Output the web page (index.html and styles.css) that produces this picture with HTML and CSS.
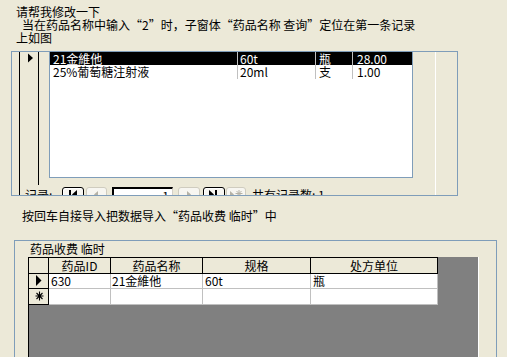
FILE: index.html
```html
<!DOCTYPE html>
<html lang="zh-CN">
<head>
<meta charset="utf-8">
<link rel="stylesheet" href="styles.css">
</head>
<body>
<div class="msg">
  <div>请帮我修改一下</div>
  <div class="indent">当在药品名称中输入“2”时，子窗体“药品名称 查询”定位在第一条记录</div>
  <div>上如图</div>
</div>

<div class="sub1">
  <div class="gutter"></div>
  <div class="main">
    <div class="top">
      <div class="sel">
        <svg class="arrow" width="6" height="10" viewBox="0 0 6 10"><path d="M0 0.5 L5 5 L0 9.5 Z" fill="#000"/></svg>
      </div>
      <div class="sp10"></div>
      <div class="ds1">
        <div class="r1 cur">
          <div class="c c-name">21金維他</div>
          <div class="c c-spec">60t</div>
          <div class="c c-unit">瓶</div>
          <div class="c c-price">28.00</div>
        </div>
        <div class="r1 second">
          <div class="c c-name">25%葡萄糖注射液</div>
          <div class="c c-spec">20ml</div>
          <div class="c c-unit">支</div>
          <div class="c c-price">1.00</div>
        </div>
      </div>
    </div>
    <div class="nav">
      <span class="nav-label">记录:</span>
      <span class="nb on b-first"><svg width="20" height="16" viewBox="0 0 20 16"><rect x="6" y="2" width="2" height="9" fill="#000"/><path d="M14 2 L9 6.5 L14 11 Z" fill="#000"/></svg></span>
      <span class="nb off b-prev"><svg width="19" height="16" viewBox="0 0 19 16"><path d="M11 3 L7 6.5 L11 10 Z" fill="#b5b2a6"/></svg></span>
      <span class="nav-input">1</span>
      <span class="nb off b-next"><svg width="20" height="16" viewBox="0 0 20 16"><path d="M8 3 L12 6.5 L8 10 Z" fill="#b5b2a6"/></svg></span>
      <span class="nb on b-last"><svg width="20" height="16" viewBox="0 0 20 16"><path d="M5 2 L10 6.5 L5 11 Z" fill="#000"/><rect x="11" y="2" width="2" height="9" fill="#000"/></svg></span>
      <span class="nb off b-new"><svg width="18" height="16" viewBox="0 0 18 16"><path d="M3 3 L7 6.5 L3 10 Z" fill="#b5b2a6"/><path d="M12 2 V9 M8.5 5.5 H15.5 M9.5 3 L14.5 8 M14.5 3 L9.5 8" stroke="#b5b2a6" stroke-width="1"/></svg></span>
      <span class="nav-count">共有记录数: 1</span>
    </div>
  </div>
  <div class="gutter-r"></div>
</div>

<div class="msg2">按回车自接导入把数据导入“药品收费 临时”中</div>

<div class="sub2">
  <div class="title">药品收费 临时</div>
  <div class="grey">
    <div class="row head">
      <div class="cell sel2"></div>
      <div class="cell w1">药品ID</div>
      <div class="cell w2">药品名称</div>
      <div class="cell w3">规格</div>
      <div class="cell w4">处方单位</div>
    </div>
    <div class="row data">
      <div class="cell sel2"><svg width="6" height="11" viewBox="0 0 6 11"><path d="M0 0 L5.5 5.5 L0 11 Z" fill="#000"/></svg></div>
      <div class="cell w1">630</div>
      <div class="cell w2">21金維他</div>
      <div class="cell w3">60t</div>
      <div class="cell w4">瓶</div>
    </div>
    <div class="row data newrow">
      <div class="cell sel2"><svg width="9" height="10" viewBox="0 0 9 10"><path d="M4.5 0.5 V9.5 M0.5 5 H8.5 M1.5 2 L7.5 8 M7.5 2 L1.5 8" stroke="#000" stroke-width="1.1"/></svg></div>
      <div class="cell w1"></div>
      <div class="cell w2"></div>
      <div class="cell w3"></div>
      <div class="cell w4"></div>
    </div>
  </div>
</div>
</body>
</html>
```

FILE: styles.css
```css
html, body {
  margin: 0;
  padding: 0;
}
body {
  background: #ECE9D8;
  font-family: "Noto Sans CJK SC", "Noto Sans", sans-serif;
  font-size: 12px;
  color: #000;
  width: 507px;
  height: 357px;
  overflow: hidden;
}

.msg {
  padding: 5px 0 0 16px;
  line-height: 13px;
}
.msg .indent {
  padding-left: 6px;
}

/* ---- first subform ---- */
.sub1 {
  margin: 7px 0 0 11px;
  width: 447px;
  height: 145px;
  box-sizing: border-box;
  border: 1px solid #7F9DB9;
  display: flex;
  overflow: hidden;
}
.gutter {
  width: 7px;
  flex: none;
}
.gutter-r {
  width: 21px;
  flex: none;
}
.main {
  width: 417px;
  flex: none;
  box-sizing: border-box;
  border-left: 1px solid #000;
  border-right: 1px solid #fff;
  display: flex;
  flex-direction: column;
}
.top {
  display: flex;
  height: 133px;
  flex: none;
}
.sel {
  width: 19px;
  flex: none;
  box-sizing: border-box;
  border-right: 1px solid #000;
}
.sel .arrow {
  display: block;
  margin: 1px 0 0 8px;
}
.sp10 {
  width: 10px;
  flex: none;
}
.ds1 {
  width: 364px;
  height: 126px;
  flex: none;
  box-sizing: border-box;
  background: #fff;
  border: 1px solid #7F9DB9;
  border-top: none;
}
.r1 {
  display: flex;
  height: 13px;
  line-height: 13px;
}
.r1.second {
  height: 14px;
  line-height: 14px;
}
.r1.cur {
  background: #000;
  color: #fff;
}
.c {
  box-sizing: border-box;
  border-right: 1px solid #c0c0c0;
  padding-left: 2px;
  white-space: nowrap;
}
.c-name { width: 188px; padding-left: 3px; }
.c-spec { width: 78px; }
.c-unit { width: 37px; padding-left: 3px; }
.c-price { width: 59px; border-right: none; padding-left: 4px; }

/* nav bar */
.nav {
  display: flex;
  align-items: flex-start;
  height: 20px;
  padding-left: 5px;
  flex: none;
}
.nav-label {
  width: 37px;
  flex: none;
  margin-top: 4px;
  line-height: 12px;
}
.nb {
  display: block;
  flex: none;
  height: 18px;
  margin-top: 2px;
  box-sizing: border-box;
  border-radius: 3px;
  background: #F7F6F1;
}
.nb svg {
  display: block;
}
.nb.on {
  border: 1px solid #000;
  box-shadow: inset 1px 1px 0 #fff;
}
.nb.off {
  border: 1px solid #CFCCBF;
}
.b-first { width: 22px; }
.b-prev { width: 21px; margin-left: 2px; }
.nav-input {
  display: block;
  flex: none;
  width: 61px;
  height: 18px;
  margin: 2px 0 0 5px;
  box-sizing: border-box;
  background: #fff;
  border-top: 2px solid #000;
  border-left: 2px solid #000;
  border-right: 1px solid #D4D0C8;
  text-align: right;
  padding-right: 3px;
  line-height: 14px;
}
.b-next { width: 22px; margin-left: 5px; }
.b-last { width: 22px; margin-left: 3px; }
.b-new { width: 20px; margin-left: 1px; }
.nav-count {
  flex: none;
  margin: 4px 0 0 6px;
  line-height: 12px;
  white-space: nowrap;
}

/* ---- second text ---- */
.msg2 {
  margin-top: 13px;
  padding-left: 22px;
  line-height: 13px;
}

/* ---- second subform ---- */
.sub2 {
  margin: 18px 0 0 14px;
  width: 483px;
  height: 117px;
  box-sizing: border-box;
  border: 1px solid #7F9DB9;
  border-bottom: none;
}
.title {
  height: 16px;
  box-sizing: border-box;
  padding: 1px 0 0 15px;
  line-height: 14px;
}
.grey {
  margin-left: 13px;
  width: 451px;
  height: 100px;
  box-sizing: border-box;
  background: #808080;
  border-left: 1px solid #000;
  border-right: 1px solid #fff;
}
.row {
  display: flex;
}
.cell {
  box-sizing: border-box;
  flex: none;
  white-space: nowrap;
}
.sel2 { width: 20px; }
.w1 { width: 62px; }
.w2 { width: 92px; }
.w3 { width: 108px; }
.w4 { width: 127px; }

.head .cell {
  height: 17px;
  line-height: 15px;
  background: #ECE9D8;
  border-top: 1px solid #000;
  border-right: 1px solid #000;
  border-bottom: 1px solid #000;
  text-align: center;
}
.data .cell {
  height: 15px;
  line-height: 14px;
  background: #fff;
  border-right: 1px solid #C0C0C0;
  border-bottom: 1px solid #C0C0C0;
  padding-left: 2px;
}
.data.newrow .cell {
  height: 16px;
}
.data .w2 { padding-left: 1px; }
.data .w4 { padding-left: 2px; }
.data .sel2 {
  background: #ECE9D8;
  border-right: 1px solid #000;
  border-bottom: 1px solid #000;
  padding-left: 7px;
}
.data .sel2 svg {
  display: block;
  margin-top: 1px;
}
.data.newrow .sel2 {
  padding-left: 6px;
}
.data.newrow .sel2 svg {
  margin-top: 2px;
}
```
